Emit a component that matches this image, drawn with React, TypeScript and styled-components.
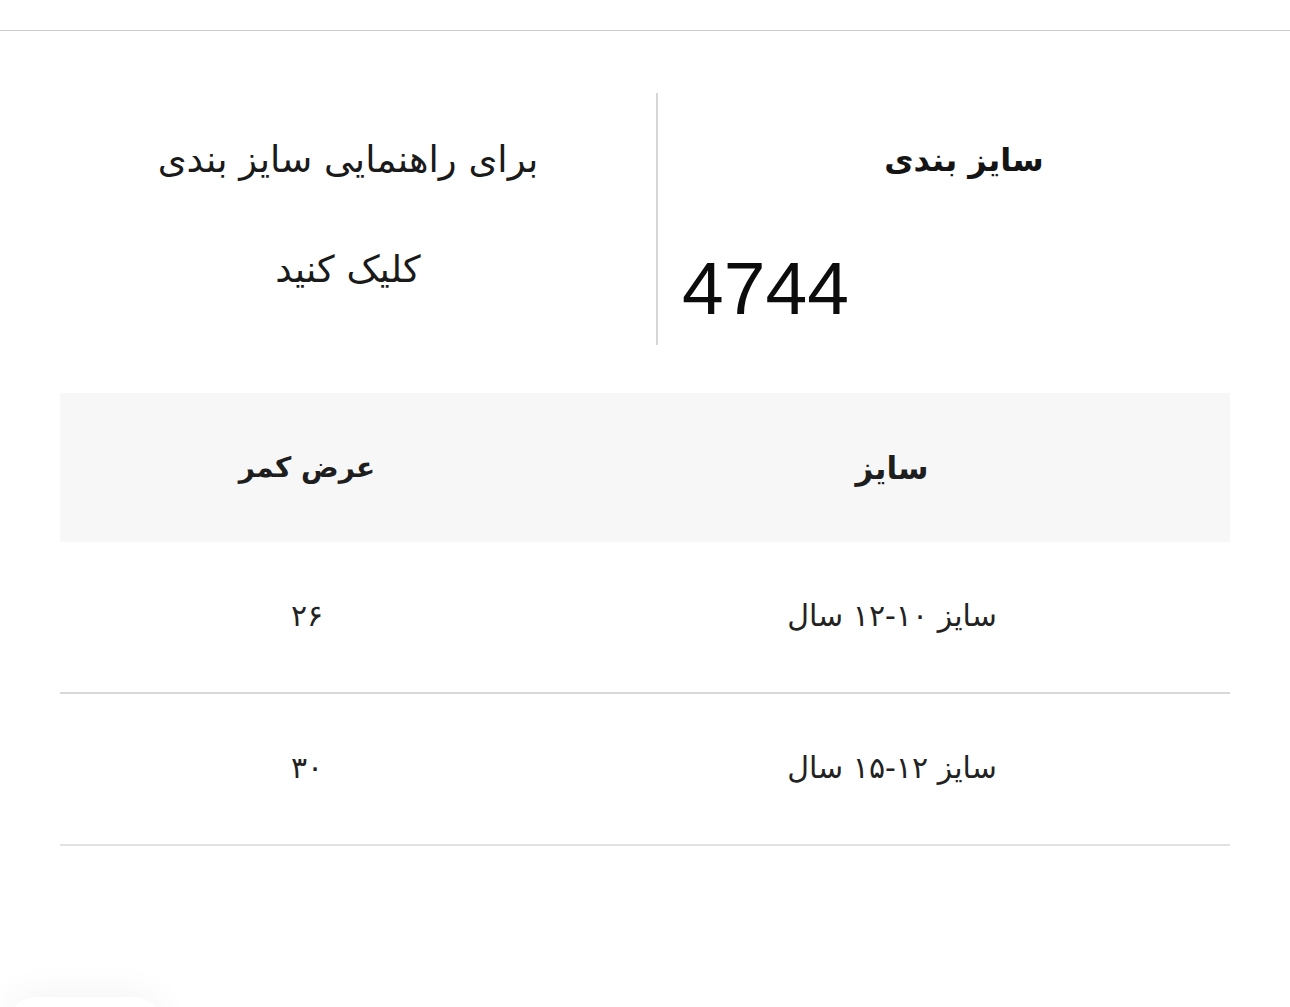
import styled, { createGlobalStyle } from "styled-components"

const GlobalStyle = createGlobalStyle`
  html, body {
    margin: 0;
    padding: 0;
    background: #ffffff;
  }
  body {
    font-family: "DejaVu Sans", "Noto Sans", sans-serif;
    color: #1c1c1c;
  }
`

const Page = styled.div`
  direction: rtl;
  min-height: 1007px;
  position: relative;
  overflow: hidden;
`

const TopBar = styled.div`
  height: 30px;
  border-bottom: 1px solid #cbcbcb;
`

const Intro = styled.section`
  display: grid;
  grid-template-columns: 614px 616px;
  margin: 62px 20px 0 40px;
  justify-content: end;
`

const InfoColumn = styled.div`
  display: flex;
  flex-direction: column;
  height: 252px;
  border-left: 2px solid #d6d6d6;
`

const Title = styled.h2`
  margin: 0;
  padding-top: 47px;
  text-align: center;
  font-size: 32px;
  font-weight: 700;
  line-height: 40px;
  color: #141414;
`

const ModelNumber = styled.div`
  direction: ltr;
  text-align: left;
  padding: 66px 0 0 24px;
  font-family: "Liberation Sans", Arial, sans-serif;
  font-size: 75px;
  line-height: 84px;
  color: #0c0c0c;
`

const GuideColumn = styled.div`
  display: flex;
  flex-direction: column;
  align-items: center;
  padding-top: 46px;
  gap: 68px;
`

const GuideLine = styled.p`
  margin: 0;
  font-size: 37px;
  line-height: 42px;
  color: #1a1a1a;
`

const Table = styled.table`
  width: 1170px;
  margin: 48px 60px 0;
  border-collapse: collapse;
  table-layout: fixed;
`

const HeadCell = styled.th<{ $w: number; $size: number }>`
  width: ${(p) => p.$w}px;
  height: 149px;
  padding: 0;
  background: #f7f7f7;
  text-align: center;
  font-size: ${(p) => p.$size}px;
  font-weight: 700;
  color: #1e1e1e;
`

const Row = styled.tr<{ $light?: boolean }>`
  border-bottom: 2px solid ${(p) => (p.$light ? "#e2e2e2" : "#d8d8d8")};
`

const Cell = styled.td`
  height: 146px;
  padding: 0 0 4px;
  text-align: center;
  font-size: 30px;
  color: #222222;
`

const CornerShadow = styled.div`
  position: absolute;
  left: 10px;
  bottom: -40px;
  width: 150px;
  height: 50px;
  border-radius: 25px;
  box-shadow: 0 0 40px rgba(0, 0, 0, 0.06);
`

const rows = [
  { size: "سایز ۱۰-۱۲ سال", waist: "۲۶" },
  { size: "سایز ۱۲-۱۵ سال", waist: "۳۰" },
]

export default function App() {
  return (
    <>
      <GlobalStyle />
      <Page>
        <TopBar />
        <Intro>
          <InfoColumn>
            <Title>سایز بندی</Title>
            <ModelNumber>4744</ModelNumber>
          </InfoColumn>
          <GuideColumn>
            <GuideLine>برای راهنمایی سایز بندی</GuideLine>
            <GuideLine>کلیک کنید</GuideLine>
          </GuideColumn>
        </Intro>
        <Table>
          <thead>
            <tr>
              <HeadCell $w={676} $size={31}>سایز</HeadCell>
              <HeadCell $w={494} $size={28}>عرض کمر</HeadCell>
            </tr>
          </thead>
          <tbody>
            {rows.map((r, i) => (
              <Row key={r.size} $light={i === rows.length - 1}>
                <Cell>{r.size}</Cell>
                <Cell>{r.waist}</Cell>
              </Row>
            ))}
          </tbody>
        </Table>
        <CornerShadow />
      </Page>
    </>
  )
}
